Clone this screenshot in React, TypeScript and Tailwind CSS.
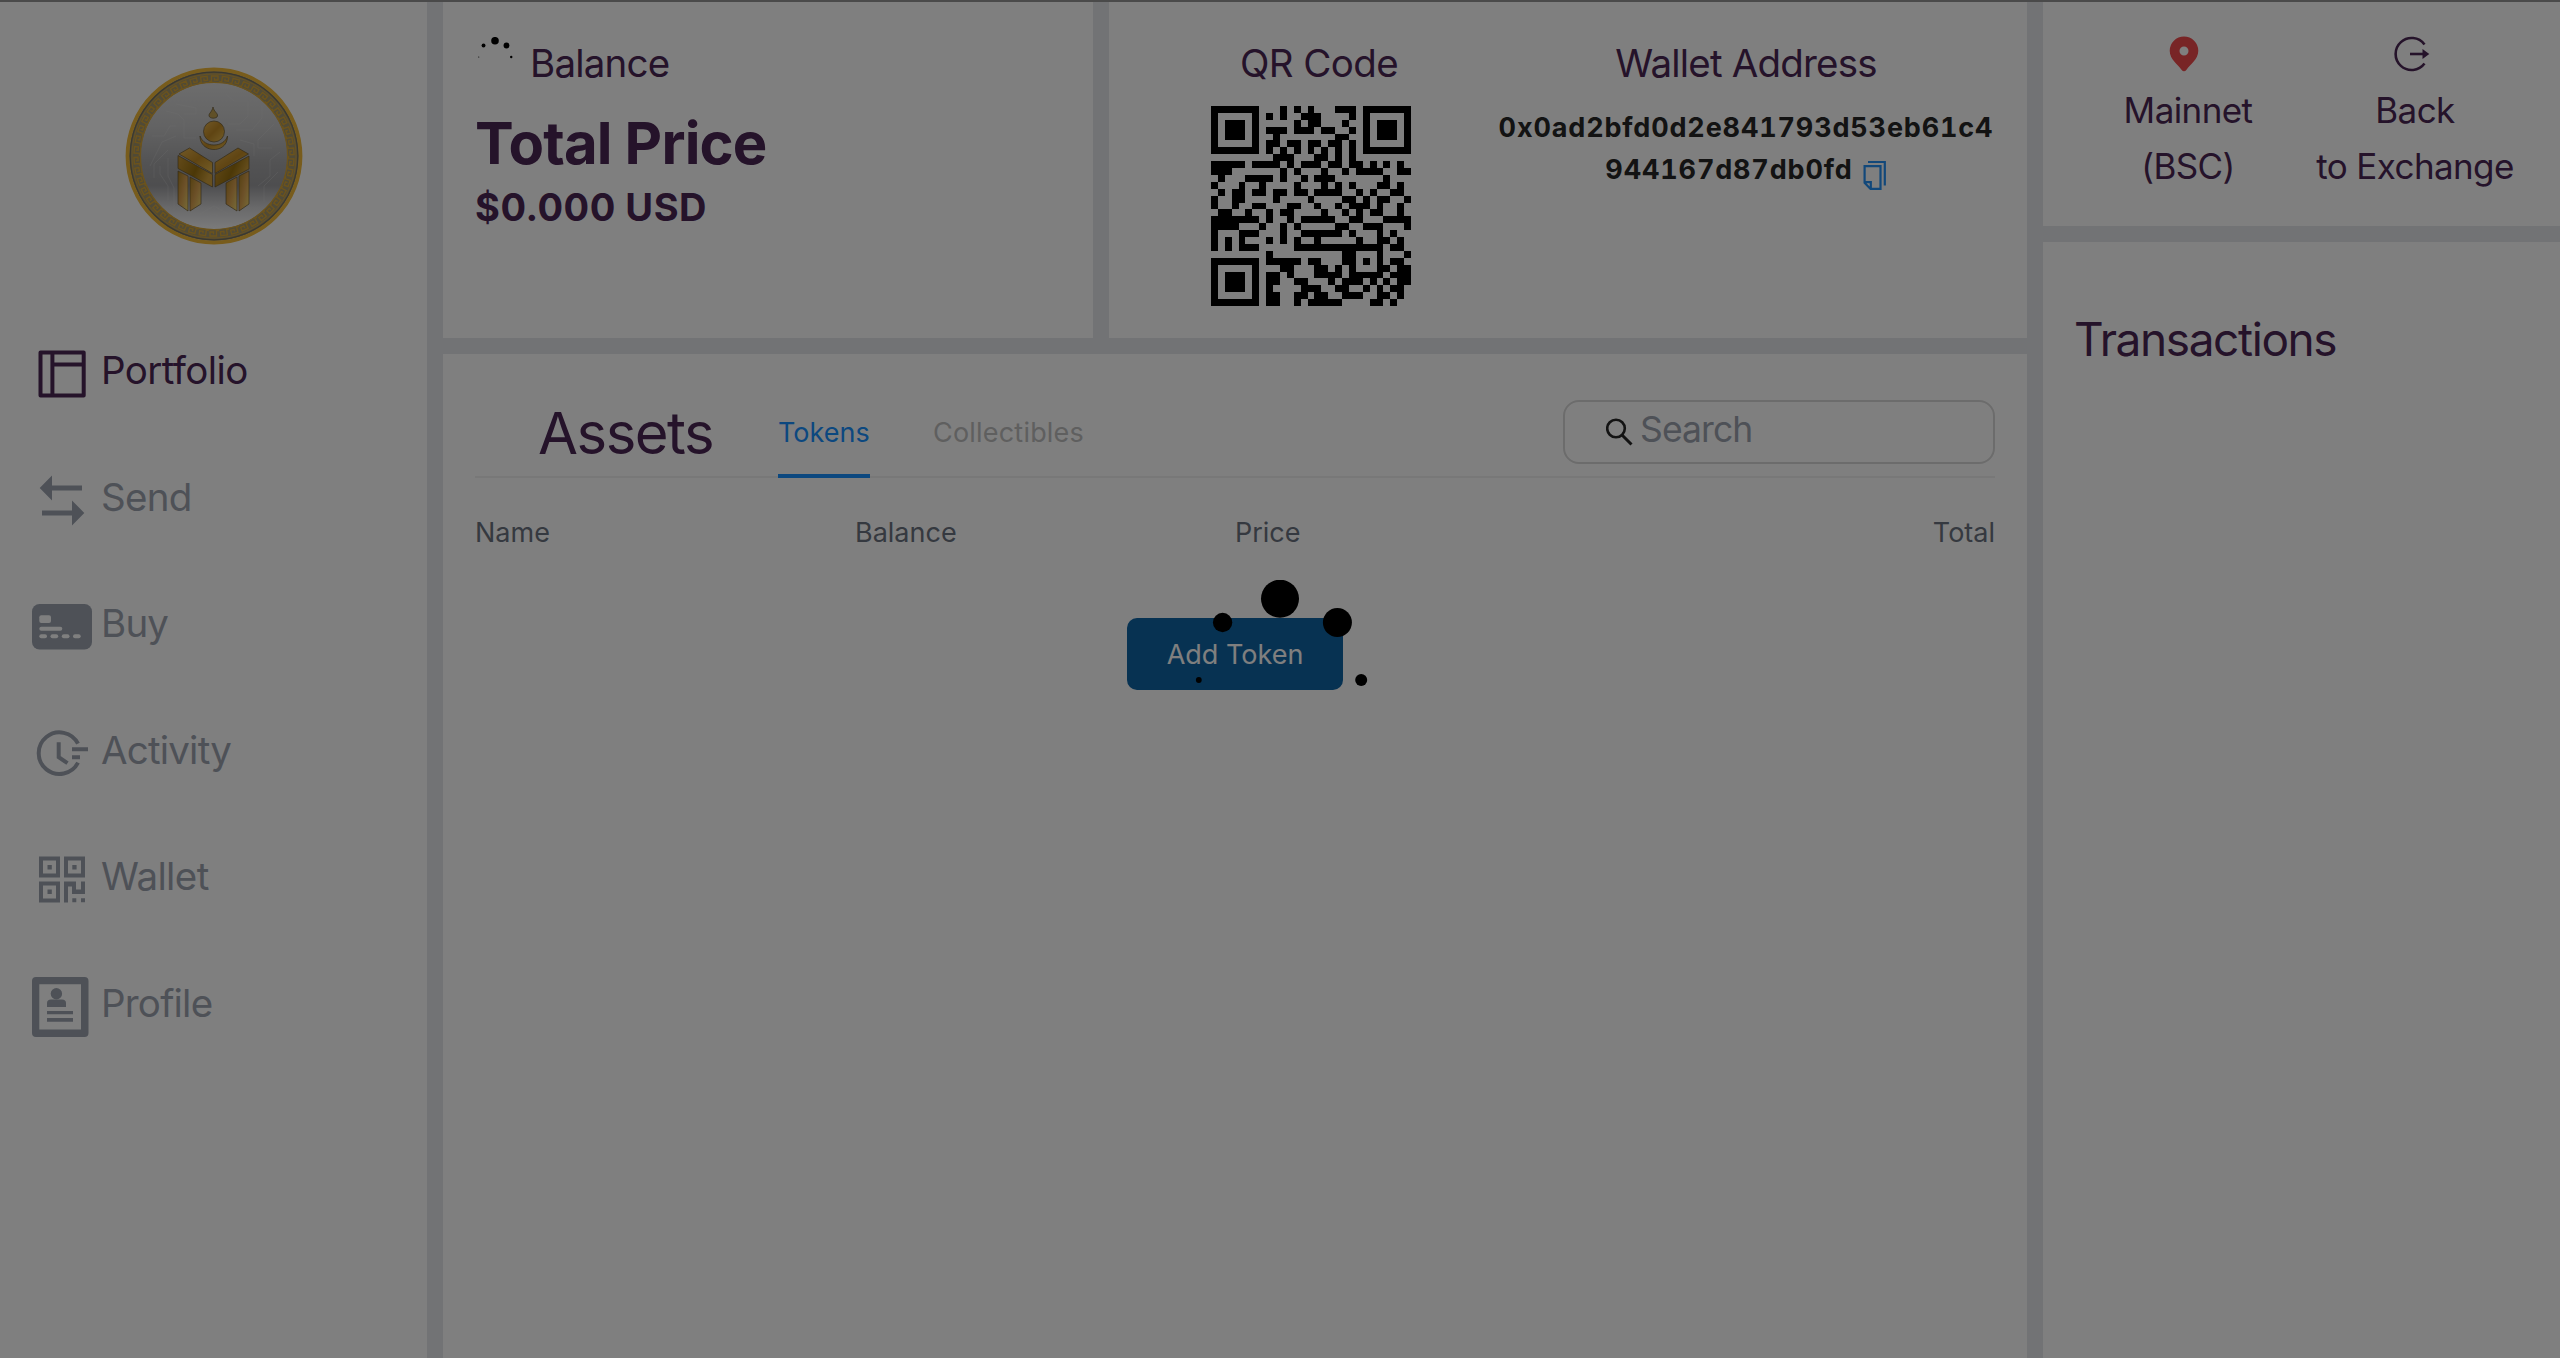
import type { ReactNode } from "react";

const QR_ROWS = [
  "#######...#.#.#...###.#######",
  "#.....#.#.#..###....#.#.....#",
  "#.###.#.....#.##...#..#.###.#",
  "#.###.#.###.###.##..#.#.###.#",
  "#.###.#..#........##..#.###.#",
  "#.....#.##.##.##.##.#.#.....#",
  "#######.#.#.#.#.#.#.#.#######",
  ".........###...##.#.#........",
  "#####.####.#.###.##.##.#.#.#.",
  "###.......#.#...#..#.####..##",
  ".#...####.#..#.###.......#...",
  "#...#..#....#...#.#.#...##.#.",
  ".#.##.##.##.##.####..#.#..##.",
  "#..##....#....#....##.#.##..#",
  "#..#..##...##..#..#.###.#..#.",
  ".##..#..#.##....#..#.#.##..#.",
  "#######.#..#.#####..##...####",
  "####...#..#.#.....##..###...#",
  "#...###...#..######.#...#.#..",
  "#.#.#...#.#.#..#.....#..##.#.",
  "#.#.###.....#############.##.",
  "........#..........##...#...#",
  "#######.#####.##...##.#.#.##.",
  "#.....#...##...##.#.#...##.##",
  "#.###.#.##.#...####.#####.###",
  "#.###.#.##..##...#.###.#.#.##",
  "#.###.#.#....###..##..#.#.##.",
  "#.....#.##..##.##..###..##.#.",
  "#######.##..#.#####....##.#..",
];

const qrPath = QR_ROWS.map((row, y) =>
  [...row].map((c, x) => (c === "#" ? `M${x} ${y}h1v1h-1z` : "")).join(""),
).join("");

const MEANDERS = Array.from({ length: 46 }, (_, i) => i * (360 / 46));

function Logo() {
  return (
    <svg className="h-[178px] w-[178px]" viewBox="-89 -89 178 178">
      <defs>
        <linearGradient id="steel" x1="0" y1="0" x2="0" y2="1">
          <stop offset="0" stopColor="#dadada" />
          <stop offset="0.3" stopColor="#c6c6c7" />
          <stop offset="0.55" stopColor="#a6a6a8" />
          <stop offset="0.7" stopColor="#9c9c9f" />
          <stop offset="0.85" stopColor="#d2d2d4" />
          <stop offset="1" stopColor="#f6f6f6" />
        </linearGradient>
        <linearGradient id="gold" x1="0" y1="0" x2="1" y2="1">
          <stop offset="0" stopColor="#e6b450" />
          <stop offset="0.5" stopColor="#c08a26" />
          <stop offset="1" stopColor="#e8bc50" />
        </linearGradient>
        <linearGradient id="deep" x1="0" y1="0" x2="1" y2="0.4">
          <stop offset="0" stopColor="#c89634" />
          <stop offset="0.6" stopColor="#98700f" />
          <stop offset="1" stopColor="#d0a03c" />
        </linearGradient>
        <linearGradient id="leg" x1="0" y1="0" x2="1" y2="1">
          <stop offset="0" stopColor="#a88020" />
          <stop offset="0.5" stopColor="#d8a050" />
          <stop offset="1" stopColor="#f0da70" />
        </linearGradient>
      </defs>
      <circle r="85" fill="#a0946c" />
      <circle r="86.5" fill="none" stroke="#f0b838" strokeWidth="3.8" />
      <circle r="83.8" fill="none" stroke="#75705e" strokeWidth="1.2" />
      <circle r="82" fill="none" stroke="#d2a440" strokeWidth="1" />
      <circle r="73.4" fill="url(#steel)" />
      <g fill="none" stroke="#d8a637" strokeWidth="1.4">
        {MEANDERS.map((a) => (
          <path
            key={a}
            transform={`rotate(${a})`}
            d="M-5 -74.5H-2.500V-80H4V-76H0.500V-78.200"
          />
        ))}
      </g>
      <circle r="73.6" fill="none" stroke="#d8a637" strokeWidth="1.3" />
      <g fill="none" stroke="#e2e2e2" strokeOpacity="0.25" strokeWidth="1">
        <path d="M-38 -52L-18 -48V-42H-30M-48 -45L-36 -42L-30 -36V-18L-18 -18M-62 -20H-50L-44 -30H-38M-64 10L-52 -14L-38 -20M-60 22V8L-46 -6M-46 44V30L-54 18V10M-40 54V32L-46 20V2" />
        <path d="M12 -62L20 -55H34V-40L26 -32H14M48 -50V-38L38 -26H22M60 -32L44 -16V-8H58M66 -4L56 4V20L44 30M50 46V30L64 16M26 -16L40 -12V0M-14 58L0 50L14 58M-20 66L0 58L22 68" />
      </g>
      <g stroke="#5f5030" strokeOpacity="0.75" strokeWidth="0.9" strokeLinejoin="round">
        <path d="M-1 -49C0 -44 4 -43 3.500 -40C3 -37 -5 -37 -5 -40.500C-5 -43 -2 -44 -1 -49Z" fill="#c0a050" />
        <circle cx="0" cy="-24.500" r="10.500" fill="url(#gold)" />
        <path d="M-14 -20C-10 -8 10 -8 13.500 -20C14 -2 -14 -2 -14 -20Z" fill="url(#gold)" />
        <path d="M-36 -3L-25 -9L-1 4.500V15.500L-26 2Z" fill="none" stroke="none" />
        <path d="M-35 -2L-24.500 -8L-1.500 6.500V17.500Z" fill="url(#gold)" />
        <path d="M-36 -0.500V12.500L-1.500 31V18.500Z" fill="url(#deep)" />
        <path d="M34.500 -2L24 -8L1 6.500V17.500Z" fill="url(#gold)" />
        <path d="M35 0V13L1 31V18.500Z" fill="url(#deep)" />
        <path d="M-36 15L-26 20V55L-36 48Z" fill="url(#leg)" />
        <path d="M-24 21L-13 27V48L-24 55Z" fill="url(#leg)" />
        <path d="M35 15L25 20V55L35 48Z" fill="url(#leg)" />
        <path d="M23 21L12 27V48L23 55Z" fill="url(#leg)" />
      </g>
    </svg>
  );
}

const PortfolioIcon = (
  <g fill="none" stroke="currentColor" strokeWidth="4" strokeLinejoin="round">
    <path d="M40.500 352.400H83.700V395.600H40.500ZM52.400 352.400V395.600M52.400 364.600H83.700" />
  </g>
);
const SendIcon = (
  <path
    fill="currentColor"
    d="M39.700 487.500L52 475V485.200H82V490H52V500ZM84.300 512.500L72 500V510H42V515H72V525Z"
  />
);
const BuyIcon = (
  <g>
    <rect x="32" y="604.300" width="60" height="45.300" rx="7.500" fill="currentColor" />
    <g fill="#ffffff">
      <rect x="39.300" y="615.500" width="11.700" height="7.700" rx="2" />
      <rect x="39.300" y="627" width="23" height="4" rx="2" />
      <rect x="39.300" y="634.500" width="7.700" height="4" rx="2" />
      <rect x="50.500" y="634.500" width="7.700" height="4" rx="2" />
      <rect x="61.800" y="634.500" width="7.700" height="4" rx="2" />
      <rect x="73" y="634.500" width="7.700" height="4" rx="2" />
    </g>
  </g>
);
const ActivityIcon = (
  <g fill="none" stroke="currentColor" strokeWidth="4">
    <path d="M78 743.500A20.800 20.800 0 1 0 78 762.500" />
    <path d="M58.700 742V757L67.500 763M72 749H88M72 757H80" />
  </g>
);
const WalletIcon = (
  <g fill="currentColor">
    <path
      fillRule="evenodd"
      d="M39 857h21v21h-21zM43 861v13h13v-13zM64 857h21v21h-21zM68 861v13h13v-13zM39 882h21v21h-21zM43 886v13h13v-13z"
    />
    <path d="M47.500 865.500h4.300v4.300h-4.300zM72.300 865.500h4.300v4.300h-4.300zM47.500 890h4.300v4.300h-4.300z" />
    <path d="M64 882H76V890H81V882H85V894.300H72V887H68V903H64ZM72.300 898.700h4v4h-4zM81 898.700h4v4h-4z" />
  </g>
);
const ProfileIcon = (
  <g fill="currentColor">
    <path
      fillRule="evenodd"
      d="M36 977H84.500Q88.500 977 88.500 981V1033Q88.500 1037 84.500 1037H36Q32 1037 32 1033V981Q32 977 36 977ZM39.300 984.300V1029.500H81V984.300Z"
    />
    <circle cx="56.400" cy="993.800" r="5.700" />
    <path d="M47 1007V1003Q47 999.500 51 999.500H62Q66 999.500 66 1003V1007ZM47 1011H73V1014.300H47ZM47 1018H73V1021.800H47Z" />
  </g>
);

function NavItem(props: { label: string; top: string; color: string; tracking: string; children: ReactNode }) {
  return (
    <div className={`flex h-[126.6px] items-center gap-[7px] ${props.color}`}>
      <svg className="h-[80px] w-[64px] shrink-0" viewBox={`30 ${props.top} 64 80`}>
        {props.children}
      </svg>
      <span className={`text-[38.5px] leading-[48px] ${props.tracking}`}>{props.label}</span>
    </div>
  );
}

function Spinner(props: { className: string }) {
  return (
    <svg className={props.className} viewBox="-100 -100 200 200" fill="#000000">
      <circle cx="0" cy="-81.300" r="19" />
      <circle cx="57.400" cy="-57.500" r="14.500" />
      <circle cx="-57.400" cy="-57.500" r="9.700" />
      <circle cx="81.200" cy="0" r="6" />
      <circle cx="-81.200" cy="0" r="2.900" />
    </svg>
  );
}

export default function App() {
  return (
    <div className="relative flex h-[1358px] w-[2560px] gap-4 overflow-hidden border-t-2 border-[#949494] bg-[#e5e7eb] font-['Inter',sans-serif] text-[#4b2655]">
      <aside className="w-[427px] shrink-0 bg-white">
        <div className="flex h-[304.7px] justify-center pt-[65px]">
          <Logo />
        </div>
        <nav className="pl-[30px]">
          <NavItem label="Portfolio" top="330" color="text-[#4b2655]" tracking="tracking-[-0.6px]">{PortfolioIcon}</NavItem>
          <NavItem label="Send" top="456.6" color="text-[#9ca3af]" tracking="tracking-[-0.7px]">{SendIcon}</NavItem>
          <NavItem label="Buy" top="583.2" color="text-[#9ca3af]" tracking="tracking-[-0.8px]">{BuyIcon}</NavItem>
          <NavItem label="Activity" top="709.8" color="text-[#9ca3af]" tracking="tracking-[-0.8px]">{ActivityIcon}</NavItem>
          <NavItem label="Wallet" top="836.4" color="text-[#9ca3af]" tracking="tracking-[-0.6px]">{WalletIcon}</NavItem>
          <NavItem label="Profile" top="963" color="text-[#9ca3af]" tracking="tracking-[-0.8px]">{ProfileIcon}</NavItem>
        </nav>
      </aside>

      <main className="flex w-[1584px] shrink-0 flex-col gap-4">
        <div className="flex h-[336px] shrink-0 gap-4">
          <section className="w-[650px] bg-white pl-8">
            <div className="flex h-[99px]">
              <Spinner className="mt-[35px] h-[40px] w-[40px]" />
              <h2 className="mt-[37px] ml-[15px] text-[38.5px] leading-[48px] tracking-[-0.8px]">Balance</h2>
            </div>
            <div className="mt-[6px] text-[58px] leading-[72px] font-bold tracking-[-0.8px]">Total Price</div>
            <div className="mt-[4px] text-[38px] leading-[48px] font-bold tracking-[0.5px]">$0.000 USD</div>
          </section>
          <section className="flex w-[918px] bg-white">
            <div className="flex w-[386px] flex-col items-center pt-[37px] pl-[34px]">
              <h2 className="text-[38.5px] leading-[48px] tracking-[-0.6px]">QR Code</h2>
              <svg className="mt-[19px] mr-[16px] h-[200px] w-[200px] shrink-0" viewBox="0 0 29 29">
                <path d={qrPath} fill="#000000" shapeRendering="crispEdges" />
              </svg>
            </div>
            <div className="flex w-[502px] flex-col items-center pt-[37px]">
              <h2 className="text-[38.5px] leading-[48px] tracking-[-0.8px]">Wallet Address</h2>
              <div className="mt-[20px] text-[27px] leading-[42px] font-bold whitespace-nowrap text-[#262626] tabular-nums">
                <div className="tracking-[0.85px]">0x0ad2bfd0d2e841793d53eb61c4</div>
                <div className="flex justify-center">
                  <span className="tracking-[0.85px]">944167d87db0fd</span>
                  <svg className="mt-[11px] ml-[10px] h-[30px] w-[24px]" viewBox="0 0 24 30" fill="none" stroke="#2490f5" strokeWidth="2.200">
                    <path d="M5 2H21.800V25.500" />
                    <path d="M1.600 6.100H17.500V28.900H7.500L1.600 22.800ZM2 22.200H7.800V28.500" />
                  </svg>
                </div>
              </div>
            </div>
          </section>
        </div>

        <section className="flex-1 bg-white px-8">
          <div className="flex h-[124px] border-b-2 border-[#f0f0f0]">
            <h1 className="mt-[43px] ml-[63px] w-[240px] text-[58px] leading-[72px] tracking-[-1.5px]">Assets</h1>
            <div className="h-[124px] w-[92px] border-b-4 border-[#1890ff] pt-[59px] text-[27px] leading-[40px] whitespace-nowrap text-[#1890ff]">Tokens</div>
            <div className="ml-[63px] pt-[59px] text-[27px] leading-[40px] tracking-[0.2px] text-[#bfbfbf]">Collectibles</div>
            <div className="mt-[46px] ml-auto flex h-[64px] w-[432px] items-center rounded-[16px] border-2 border-[#d9d9d9] pl-[41px]">
              <svg className="h-[28px] w-[28px]" viewBox="0 0 28 28" fill="none" stroke="#262626" strokeWidth="2.600">
                <circle cx="10" cy="10.500" r="8.800" />
                <path d="M16 17L25.500 26.500" strokeWidth="3" />
              </svg>
              <span className="ml-[6px] -mt-[4px] text-[35.5px] leading-[44px] tracking-[-0.9px] text-[#9ca3af]">Search</span>
            </div>
          </div>
          <div className="mt-[34px] grid h-[42px] grid-cols-4 text-[27px] leading-[42px] text-[#6b7280]">
            <span>Name</span>
            <span>Balance</span>
            <span>Price</span>
            <span className="text-right">Total</span>
          </div>
          <div className="mt-[64px] ml-[652px] flex h-[72px] w-[216px] items-center justify-center rounded-[10px] bg-[#0e64a4] pt-[2px] text-[27px] whitespace-nowrap text-white">Add Token</div>
        </section>
      </main>

      <div className="flex w-[517px] shrink-0 flex-col gap-4">
        <section className="flex h-[224px] shrink-0 bg-white text-[35px] leading-[56px] tracking-[-0.6px]">
          <div className="ml-[73px] flex w-[144px] flex-col items-center">
            <svg className="mt-[34px] mr-[8px] h-[36px] w-[30px]" viewBox="0 0 30 36">
              <path
                fill="#f04a4c"
                fillRule="evenodd"
                d="M15 0.500A14.300 14.300 0 0 0 0.700 14.800C0.700 23.500 9 28.500 12.500 33.800Q15 36.800 17.500 33.800C21 28.500 29.300 23.500 29.300 14.800A14.300 14.300 0 0 0 15 0.500ZM15 10.500A4.500 4.500 0 1 1 15 19.500A4.500 4.500 0 1 1 15 10.500Z"
              />
            </svg>
            <span className="mt-[10px]">Mainnet</span>
            <span>(BSC)</span>
          </div>
          <div className="ml-[55px] flex w-[200px] flex-col items-center whitespace-nowrap">
            <svg className="mt-[34px] mr-[6px] h-[36px] w-[36px]" viewBox="0 0 36 36" fill="none" stroke="currentColor" strokeWidth="2.600">
              <path d="M30.500 8.500A16 16 0 1 0 30.500 27.500" />
              <path d="M16 18H29" />
              <path d="M28.500 12.900L35.300 18L28.500 23.100Z" fill="currentColor" stroke="none" />
            </svg>
            <span className="mt-[10px]">Back</span>
            <span>to Exchange</span>
          </div>
        </section>
        <section className="flex-1 bg-white pt-[68px] pl-[31px] text-[46px] leading-[58px] tracking-[-1.4px]">Transactions</section>
      </div>

      <div className="fixed top-0 left-0 flex h-[1358px] w-[2560px] justify-center bg-black/50 pt-[580px]">
        <Spinner className="h-[200px] w-[200px]" />
      </div>
    </div>
  );
}
